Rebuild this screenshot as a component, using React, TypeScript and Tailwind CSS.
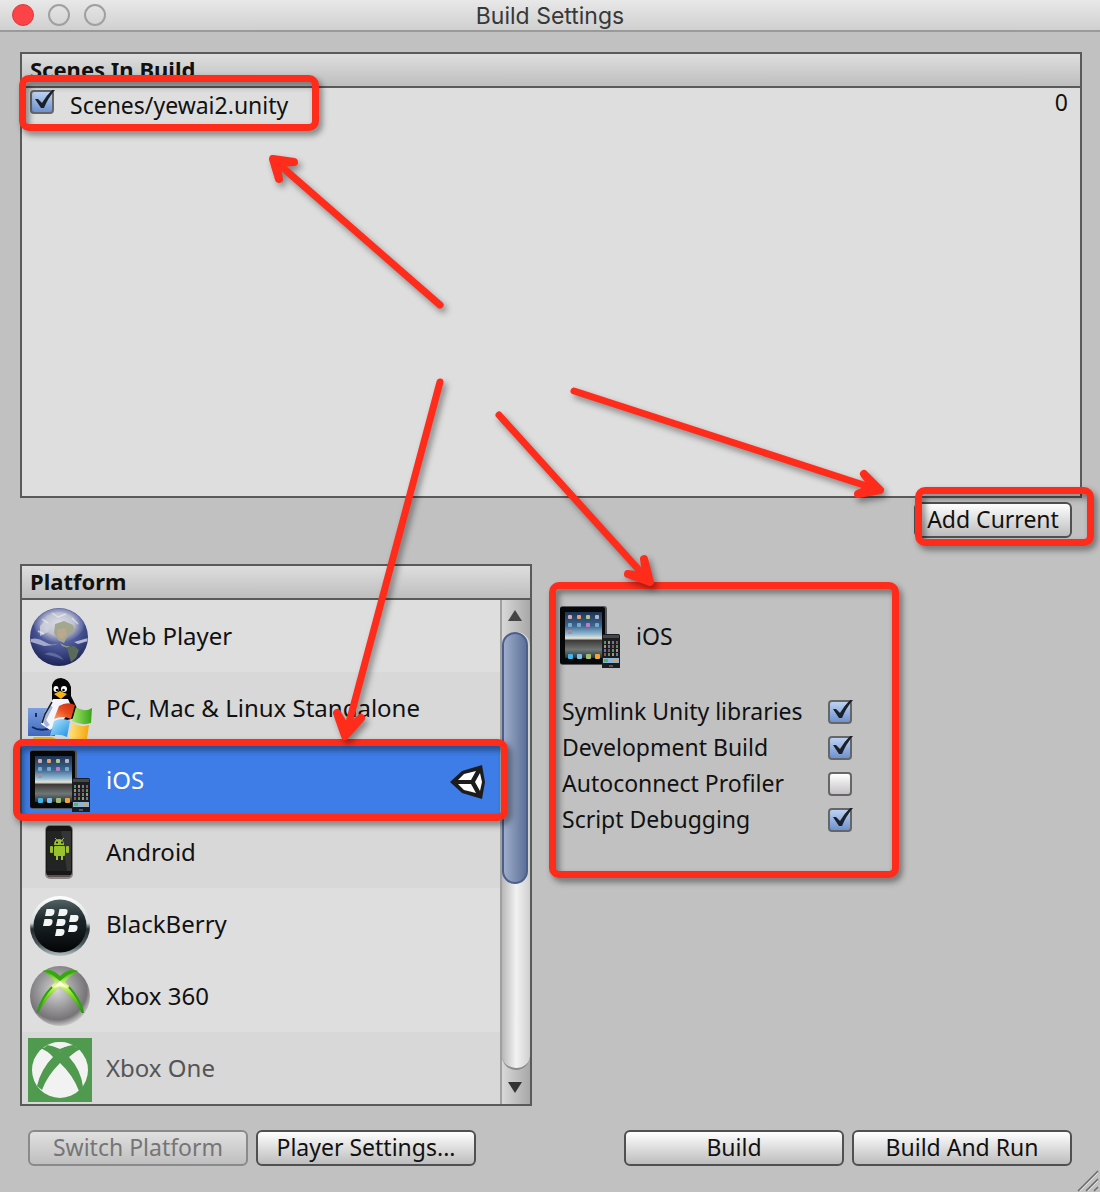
import React, { useState } from "react";

const FONT = "font-['Noto_Sans',sans-serif]";

function GlobeIcon() {
  return (
    <svg viewBox="0 0 64 64" className="size-16" aria-hidden="true">
      <defs>
        <radialGradient id="globe-sea" cx="0.5" cy="0.3" r="0.75">
          <stop offset="0" stopColor="#8d97bd" />
          <stop offset="0.5" stopColor="#4b5798" />
          <stop offset="1" stopColor="#161c4e" />
        </radialGradient>
        <radialGradient id="globe-cap" cx="0.5" cy="0.5" r="0.5">
          <stop offset="0" stopColor="#dddfe6" />
          <stop offset="0.6" stopColor="#bfc2d2" />
          <stop offset="1" stopColor="#8087b5" stopOpacity="0.3" />
        </radialGradient>
        <clipPath id="globe-clip"><circle cx="31" cy="33" r="28.5" /></clipPath>
      </defs>
      <circle cx="31" cy="33" r="29" fill="url(#globe-sea)" />
      <g clipPath="url(#globe-clip)">
        <ellipse cx="31" cy="20" rx="25" ry="18" fill="url(#globe-cap)" />
        <path d="M12 22 L18 16 L24 20 L20 28 L12 32 Z" fill="#cfd1dc" opacity="0.8" />
        <path d="M27 20 L36 17 L45 21 L47 27 L41 31 L38 35 L36 39 L30 36 L26 29 Z" fill="#a3a78f" />
        <path d="M29 26 L37 24 L39 30 L34 35 L30 33 Z" fill="#bba88f" />
        <path d="M32 39 L38 42 L42 42 L40 44 L34 42 Z" fill="#8f9b79" />
        <path d="M39 43 L46 42 L51 46 L48 54 L43 58 L41 51 Z" fill="#5b6b5a" />
        <path d="M3 35 Q10 33 17 38 T31 39 L27 41 L16 42 L3 38 Z" fill="#b4bad6" opacity="0.85" />
        <path d="M46 38 L60 34 L60 37 L50 40 Z" fill="#b4bad6" />
        <path d="M16 50 Q24 46 32 52 L36 56 L28 53 Z" fill="#7b87b8" opacity="0.6" />
        <path d="M14 15 L20 19 M24 9 L30 13 L38 10 M44 14 L50 20 M10 27 L16 30" stroke="#f2f3f7" strokeWidth="1.5" fill="none" opacity="0.6" />
      </g>
    </svg>
  );
}

function StandaloneIcon() {
  return (
    <svg viewBox="0 0 64 64" className="size-16" aria-hidden="true">
      <defs>
        <linearGradient id="finder" x1="0" x2="0" y1="0" y2="1">
          <stop offset="0" stopColor="#7c9fe0" /><stop offset="1" stopColor="#3f69bd" />
        </linearGradient>
        <linearGradient id="win-red" x1="0" x2="1" y1="1" y2="0">
          <stop offset="0" stopColor="#f8a070" /><stop offset="0.5" stopColor="#e84b1c" /><stop offset="1" stopColor="#c92a12" />
        </linearGradient>
        <linearGradient id="win-green" x1="0" x2="1">
          <stop offset="0" stopColor="#a5e66e" /><stop offset="1" stopColor="#35a317" />
        </linearGradient>
        <linearGradient id="win-blue" x1="0" x2="1" y1="0" y2="1">
          <stop offset="0" stopColor="#b9eaff" /><stop offset="1" stopColor="#1a8fe0" />
        </linearGradient>
        <linearGradient id="win-yellow" x1="0" x2="1">
          <stop offset="0" stopColor="#ffe37a" /><stop offset="1" stopColor="#f6a50a" />
        </linearGradient>
      </defs>
      <path d="M0 32 H27 V60 H0 Z" fill="url(#finder)" />
      <path d="M8 37 V41 M17 37 V40" stroke="#1a2e66" strokeWidth="2" />
      <path d="M4 51 Q12 56 24 52" stroke="#16295e" strokeWidth="2" fill="none" />
      <path d="M24 9 Q26 2 33 2 Q41 3 43 11 V20 L49 32 L48 42 L30 46 L15 46 L18 36 L24 26 Z" fill="#060606" />
      <path d="M25 23 L40 23 L44 32 L34 46 L22 54 L13 48 L17 36 Z" fill="#f4f6fb" />
      <path d="M23 30 L16 44 L20 50" stroke="#a5b6dd" strokeWidth="4" fill="none" />
      <path d="M24 26 L17 38 L14 47" stroke="#222" strokeWidth="1.5" fill="none" />
      <ellipse cx="28" cy="13" rx="2.5" ry="3" fill="#fff" />
      <ellipse cx="36" cy="13" rx="3" ry="3" fill="#fff" />
      <circle cx="29" cy="14" r="1.3" /><circle cx="35.5" cy="14" r="1.3" />
      <path d="M26 18 L32 15 L39 18 L33 23 Z" fill="#f7b416" />
      <path d="M31 30 Q39 25 47 29 L43 43 Q35 39 26 43 Z" fill="url(#win-red)" />
      <path d="M48 31 Q56 37 64 32 L63 47 Q54 50 44 45 Z" fill="url(#win-green)" />
      <path d="M26 45 Q34 41 42 45 L39 61 Q31 57 22 60 Z" fill="url(#win-blue)" />
      <path d="M44 47 Q52 52 61 49 L59 63 Q48 67 41 62 Z" fill="url(#win-yellow)" />
      <path d="M6 61 H24 L30 64 H4 Z" fill="#e9b526" />
    </svg>
  );
}

function IosIcon({ id }: { id: string }) {
  const dots = ["#d8a7ad", "#e6a06d", "#b8c190", "#b6b4c1"];
  const dock = ["#3fb4ee", "#7dbdec", "#a3bc70", "#f1a436"];
  const phone = ["#4c9a5a", "#a9927a", "#5f7fa0", "#9c4c58"];
  return (
    <svg viewBox="0 0 64 64" className="size-16" aria-hidden="true">
      <defs>
        <linearGradient id={id} x1="0" x2="0" y1="0" y2="1">
          <stop offset="0" stopColor="#1f3453" />
          <stop offset="0.3" stopColor="#3c6690" />
          <stop offset="0.5" stopColor="#9dc2d8" />
          <stop offset="0.57" stopColor="#e9e6d8" />
          <stop offset="0.62" stopColor="#3e3a3a" />
          <stop offset="0.82" stopColor="#6e7774" />
          <stop offset="1" stopColor="#273238" />
        </linearGradient>
      </defs>
      <rect x="2" y="2" width="47" height="59" rx="3" fill="#55585f" />
      <rect x="2" y="3" width="45" height="57" rx="2" fill="#07080a" />
      <rect x="7" y="8" width="37" height="46" fill={`url(#${id})`} />
      {dots.map((c, i) => (
        <g key={c}>
          <rect x={10 + i * 9} y="11" width="4" height="4" rx="1" fill={c} />
          <rect x={10 + i * 9} y="19" width="4" height="4" rx="1" fill={i === 2 ? "#c07cc4" : "#79a9c9"} />
          <rect x={10 + i * 9} y="50" width="5" height="5" rx="1" fill={dock[i]} />
        </g>
      ))}
      <rect x="10" y="26" width="4" height="4" rx="1" fill="#a08f9b" />
      <rect x="44" y="30" width="18" height="35" rx="1.5" fill="#1b1d20" />
      <rect x="45" y="31" width="16" height="3" fill="#44474c" />
      {[0, 1, 2, 3].map((r) =>
        phone.map((c, i) => (
          <rect key={`${r}-${c}`} x={46 + i * 4} y={37 + r * 4} width="2" height="3" fill={phone[(i + r) % 4]} />
        ))
      )}
      <rect x="45" y="54" width="16" height="5" fill="#8fb4d4" />
      <rect x="46" y="55" width="4" height="3" fill="#4bbd61" />
      <rect x="56" y="55" width="4" height="3" fill="#e8a14c" />
      <rect x="51" y="61" width="4" height="2" fill="#53565b" />
    </svg>
  );
}

function AndroidIcon() {
  return (
    <svg viewBox="0 0 64 64" className="size-16" aria-hidden="true">
      <rect x="17" y="5" width="28" height="54" rx="5" fill="#8d8686" />
      <rect x="18" y="6" width="26" height="50" rx="4" fill="#171717" />
      <rect x="19" y="11" width="24" height="40" fill="#222323" />
      <path d="M33 11 H43 V51 H39 Z" fill="#343636" />
      <path d="M20 55 H42 V57 H20 Z" fill="#5b5050" />
      <g fill="#9ac22f">
        <path d="M26 25 Q26 19 31 19 Q36 19 36 25 Z" />
        <rect x="26" y="26" width="11" height="10" rx="1" />
        <rect x="22" y="26" width="3" height="7" rx="1" />
        <rect x="38" y="26" width="3" height="7" rx="1" />
        <rect x="28" y="35" width="2" height="5" />
        <rect x="33" y="35" width="2" height="5" />
      </g>
      <path d="M27 18 L29 20 M36 18 L34 20" stroke="#9ac22f" strokeWidth="1" />
      <circle cx="29" cy="22.5" r="0.9" /><circle cx="34" cy="22.5" r="0.9" />
    </svg>
  );
}

function BlackBerryIcon() {
  const keys = [
    [16, 17], [29, 17], [14, 27], [27, 27], [40, 23], [39, 33], [26, 37],
  ];
  return (
    <svg viewBox="0 0 64 64" className="size-16" aria-hidden="true">
      <defs>
        <linearGradient id="bb-ring" x1="0" x2="0" y1="0" y2="1">
          <stop offset="0" stopColor="#ffffff" /><stop offset="0.45" stopColor="#d3d9db" />
          <stop offset="0.55" stopColor="#222b2e" /><stop offset="0.8" stopColor="#4b585c" /><stop offset="1" stopColor="#b8c2c4" />
        </linearGradient>
        <linearGradient id="bb-face" x1="0" x2="0" y1="0" y2="1">
          <stop offset="0" stopColor="#516265" /><stop offset="0.4" stopColor="#1a2427" /><stop offset="1" stopColor="#030506" />
        </linearGradient>
      </defs>
      <circle cx="32" cy="34" r="30" fill="url(#bb-ring)" />
      <circle cx="32" cy="34" r="26.5" fill="url(#bb-face)" />
      {keys.map(([x, y]) => (
        <path key={`${x}-${y}`} transform={`translate(${x} ${y})`} d="M2.500 0 H8 Q11 0 10.500 3 Q10 7 6.500 7 H1 Z" fill="#f3f5f5" />
      ))}
    </svg>
  );
}

function Xbox360Icon() {
  return (
    <svg viewBox="0 0 64 64" className="size-16" aria-hidden="true">
      <defs>
        <radialGradient id="x360-ball" cx="0.45" cy="0.4" r="0.62">
          <stop offset="0" stopColor="#d8d7d8" /><stop offset="0.5" stopColor="#98979a" />
          <stop offset="0.8" stopColor="#777478" /><stop offset="1" stopColor="#d4d4d4" />
        </radialGradient>
        <linearGradient id="x360-leg" x1="0" x2="0" y1="0" y2="1">
          <stop offset="0" stopColor="#3aa814" /><stop offset="0.35" stopColor="#e4fa8a" />
          <stop offset="0.6" stopColor="#7ed321" /><stop offset="1" stopColor="#1c8a10" />
        </linearGradient>
      </defs>
      <circle cx="32" cy="32" r="30" fill="url(#x360-ball)" />
      <path d="M15 7 Q24 4 32 12 Q40 4 50 7 Q43 11 37 18 Q51 31 56 49 L54 49 Q46 34 32 23 Q18 34 10 49 L9 49 Q12 32 27 18 Q21 11 15 7 Z" fill="url(#x360-leg)" />
      <path d="M15 7 Q24 4 32 12 Q40 4 50 7 Q41 9 32 17 Q23 9 15 7 Z" fill="#35a80f" />
      <path d="M25 24 L32 17 L40 24 L32 22 Z" fill="#fbffe0" />
      <path d="M24 23 Q14 33 10 47 M41 23 Q51 34 55 47" stroke="#2ca015" strokeWidth="2" fill="none" />
    </svg>
  );
}

function XboxOneIcon() {
  return (
    <svg viewBox="0 0 64 64" className="mt-1 size-16" aria-hidden="true">
      <rect width="64" height="64" fill="#4f9a4e" />
      <circle cx="32" cy="32" r="28" fill="#f2f2f2" />
      <path d="M12 10 Q24 8 32 14 Q42 8 54 10 Q48 13 41 19 Q53 32 55 49 L51 53 Q45 37 32 25 Q19 38 14 52 L9 48 Q13 31 25 19 Q20 13 12 10 Z" fill="#4f9a4e" />
      <path d="M16 10 L22 5 Q25 9 32 10 Q40 9 43 5 L49 10 L32 14 Z" fill="#4f9a4e" />
      <path d="M19 7 Q32 1 45 7 Q37 8 32 11 Q26 8 19 7 Z" fill="#f2f2f2" />
    </svg>
  );
}

function UnityIcon() {
  return (
    <svg viewBox="0 0 36 36" className="mt-1 size-9" aria-hidden="true">
      <path d="M0 18 L12 7 L32 1 L35 18 L32 35 L12 29 Z" fill="#1c1c1c" />
      <path d="M8 16 L14 10 L26 7 L21 16 Z M8 20 L14 26 L26 29 L21 20 Z M25 18 L30 9 L32 18 L30 27 Z" fill="#fff" />
    </svg>
  );
}

function Tick({ id, defaultChecked }: { id: string; defaultChecked: boolean }) {
  const [checked, setChecked] = useState(defaultChecked);
  return (
    <span className="relative size-6">
      <input
        id={id}
        type="checkbox"
        checked={checked}
        onChange={(e) => setChecked(e.target.checked)}
        className="block size-6 appearance-none rounded-sm border-2 border-[#666] bg-linear-to-b from-white to-[#c4c2c4] checked:from-[#bdd2f1] checked:to-[#6e92cf]"
      />
      {checked && (
        <svg viewBox="0 0 28 26" className="pointer-events-none absolute top-0 left-0 h-[26px] w-7" aria-hidden="true">
          <path d="M5 9 L8 9 L12 13 Q16 6 22 0 L25 0 Q18 8 14 18 L11 18 Z" fill="#1b2029" />
        </svg>
      )}
    </span>
  );
}

function PushButton({ children, className = "", disabled = false }: { children: React.ReactNode; className?: string; disabled?: boolean }) {
  return (
    <button
      type="button"
      disabled={disabled}
      className={`h-9 rounded-md border-2 border-[#505050] bg-linear-to-b from-white to-[#bebdbe] pb-0.5 text-center leading-[30px] whitespace-nowrap disabled:border-[#8a8a8a] disabled:from-[#e0e0e0] disabled:to-[#bfbfbf] disabled:text-[#757575] ${className}`}
    >
      {children}
    </button>
  );
}

function Mark({ className }: { className: string }) {
  return (
    <div
      aria-hidden="true"
      className={`pointer-events-none absolute z-10 rounded-[10px] border-[7px] border-[#ff2c1b] drop-shadow-[3px_4px_3px_rgba(0,0,0,0.45)] ${className}`}
    />
  );
}

const platforms = [
  { name: "Web Player", icon: <GlobeIcon />, row: "bg-[#dedede]" },
  { name: "PC, Mac & Linux Standalone", icon: <StandaloneIcon />, row: "bg-[#d8d8d8]" },
  { name: "iOS", icon: <IosIcon id="ios-list" />, row: "bg-[#3e7de7] text-white", current: true },
  { name: "Android", icon: <AndroidIcon />, row: "bg-[#d8d8d8]" },
  { name: "BlackBerry", icon: <BlackBerryIcon />, row: "bg-[#dedede]" },
  { name: "Xbox 360", icon: <Xbox360Icon />, row: "bg-[#dedede]" },
  { name: "Xbox One", icon: <XboxOneIcon />, row: "bg-[#d8d8d8] text-[#555]" },
];

const options = [
  { id: "symlink", label: "Symlink Unity libraries", on: true },
  { id: "development", label: "Development Build", on: true },
  { id: "profiler", label: "Autoconnect Profiler", on: false },
  { id: "debugging", label: "Script Debugging", on: true },
];

const arrows = [
  { shaft: "M440 305 L274 160", head: "M294 162 L273 159 L279 179 L276 163 Z" },
  { shaft: "M440 382 L346 734", head: "M337 713 L345 736 L361 718 L347 730 Z" },
  { shaft: "M499 415 L649 581", head: "M628 574 L650 582 L644 559 L647 577 Z" },
  { shaft: "M574 391 L879 490", head: "M864 474 L880 490 L858 494 L874 487 Z" },
];

const panelHead = "h-[34px] border-b-2 border-[#5a5a5a] bg-linear-to-b from-[#dedede] to-[#bebebe] px-2 text-[22px] leading-[30px] font-bold";

export default function App() {
  return (
    <div className={`relative flex min-h-screen flex-col overflow-hidden bg-[#c1c1c1] text-[23px] text-[#111] ${FONT}`}>
      <header className="relative flex h-8 items-center justify-center border-b-2 border-[#9a9a9a] bg-linear-to-b from-[#e8e8e8] to-[#d0d0d0]">
        <div className="absolute left-3 flex gap-3.5">
          <button type="button" aria-label="Close" className="size-[22px] rounded-full border border-[#e0383c] bg-[#fc4348]" />
          <button type="button" aria-label="Minimize" className="size-[22px] rounded-full border-2 border-[#a0a0a0]" />
          <button type="button" aria-label="Zoom" className="size-[22px] rounded-full border-2 border-[#a0a0a0]" />
        </div>
        <h1 className="pt-0.5 font-['Inter',sans-serif] leading-8 text-[#383838]">Build Settings</h1>
      </header>

      <main className="flex flex-1 flex-col pt-5 pr-[18px] pb-6 pl-5">
        <section className="border-2 border-[#5a5a5a] bg-[#dedede]">
          <h2 className={panelHead}>Scenes In Build</h2>
          <div className="min-h-[408px]">
            <div className="relative flex h-9 items-start justify-between pr-3 pl-2">
              <div className="flex items-start">
                <div className="pt-0.5">
                  <Tick id="scene" defaultChecked />
                </div>
                <label htmlFor="scene" className="pl-4 leading-[34px]">Scenes/yewai2.unity</label>
              </div>
              <span className="leading-7">0</span>
              <Mark className="-top-[13px] -left-[3px] h-14 w-[300px]" />
            </div>
          </div>
        </section>

        <div className="mt-1 flex justify-end pr-2.5">
          <div className="relative">
            <PushButton className="block w-[158px]">Add Current</PushButton>
            <Mark className="-top-[15px] left-px h-[59px] w-[179px]" />
          </div>
        </div>

        <div className="mt-[26px] flex items-start gap-7">
          <section className="w-[512px] shrink-0 border-2 border-[#5a5a5a] bg-[#dedede]">
            <h2 className={panelHead}>Platform</h2>
            <div className="relative flex">
              <ul className="flex-1 text-2xl">
                {platforms.map((p) => (
                  <li key={p.name}>
                    <button type="button" className={`flex h-[72px] w-full items-center pr-3.5 pl-1.5 text-left ${p.row}`}>
                      {p.icon}
                      <span className="flex-1 pl-3.5 whitespace-nowrap">{p.name}</span>
                      {p.current && <UnityIcon />}
                    </button>
                  </li>
                ))}
              </ul>
              <div className="flex w-[30px] flex-col border-l-2 border-[#a0a0a0] bg-linear-to-r from-[#d8d8d8] to-[#a8a8a8]">
                <button type="button" aria-label="Scroll up" className="flex h-8 items-center justify-center pr-0.5">
                  <svg viewBox="0 0 14 12" className="h-3 w-3.5" aria-hidden="true"><path d="M7 0 L14 11 H0 Z" fill="#444" /></svg>
                </button>
                <div className="flex-1 rounded-full border-b-2 border-[#8a8a8a] bg-linear-to-r from-[#b8b8b8] via-[#f2f2f2] to-[#d0d0d0]">
                  <div className="h-[252px] w-[26px] rounded-full border-2 border-[#4c5f8c] bg-linear-to-r from-[#9fadca] to-[#5d7199]" />
                </div>
                <button type="button" aria-label="Scroll down" className="flex h-[34px] items-center justify-center pr-0.5">
                  <svg viewBox="0 0 14 12" className="h-3 w-3.5" aria-hidden="true"><path d="M7 12 L0 1 H14 Z" fill="#333" /></svg>
                </button>
              </div>
              <Mark className="top-[139px] -left-[9px] h-[82px] w-[495px]" />
            </div>
          </section>

          <section className="relative mt-10 w-[330px]">
            <div className="-ml-0.5 flex h-16 items-center">
              <IosIcon id="ios-detail" />
              <h3 className="pl-3.5">iOS</h3>
            </div>
            <div className="mt-[26px] pl-0.5">
              {options.map((o) => (
                <div key={o.id} className="flex h-9 items-center">
                  <label htmlFor={o.id} className="w-[266px] pb-0.5 whitespace-nowrap">{o.label}</label>
                  <Tick id={o.id} defaultChecked={o.on} />
                </div>
              ))}
            </div>
            <Mark className="-top-[22px] -left-[11px] h-[296px] w-[350px]" />
          </section>
        </div>

        <footer className="mt-6 flex justify-between pr-2.5 pl-2">
          <div className="flex gap-2">
            <PushButton className="w-[220px]" disabled>Switch Platform</PushButton>
            <PushButton className="w-[220px]">Player Settings...</PushButton>
          </div>
          <div className="flex gap-2">
            <PushButton className="w-[220px]">Build</PushButton>
            <PushButton className="w-[220px]">Build And Run</PushButton>
          </div>
        </footer>
      </main>

      <svg viewBox="0 0 24 24" className="absolute right-0 bottom-0 size-6" aria-hidden="true">
        <path d="M2 23 L22 3 M10 23 L22 11 M18 23 L22 19" stroke="#6b6b6b" strokeWidth="1.5" />
        <path d="M4 23 L22 5 M12 23 L22 13" stroke="#e2e2e2" strokeWidth="1" />
      </svg>

      <svg
        viewBox="0 0 1100 1192"
        className="pointer-events-none absolute top-0 left-0 z-20 h-[1192px] w-[1100px] max-w-none drop-shadow-[3px_4px_3px_rgba(0,0,0,0.4)]"
        aria-hidden="true"
      >
        {arrows.map((a) => (
          <g key={a.shaft} stroke="#ff2c1b" strokeLinecap="round" strokeLinejoin="round">
            <path d={a.shaft} fill="none" strokeWidth="7" />
            <path d={a.head} fill="#ff2c1b" strokeWidth="8" />
          </g>
        ))}
      </svg>
    </div>
  );
}
